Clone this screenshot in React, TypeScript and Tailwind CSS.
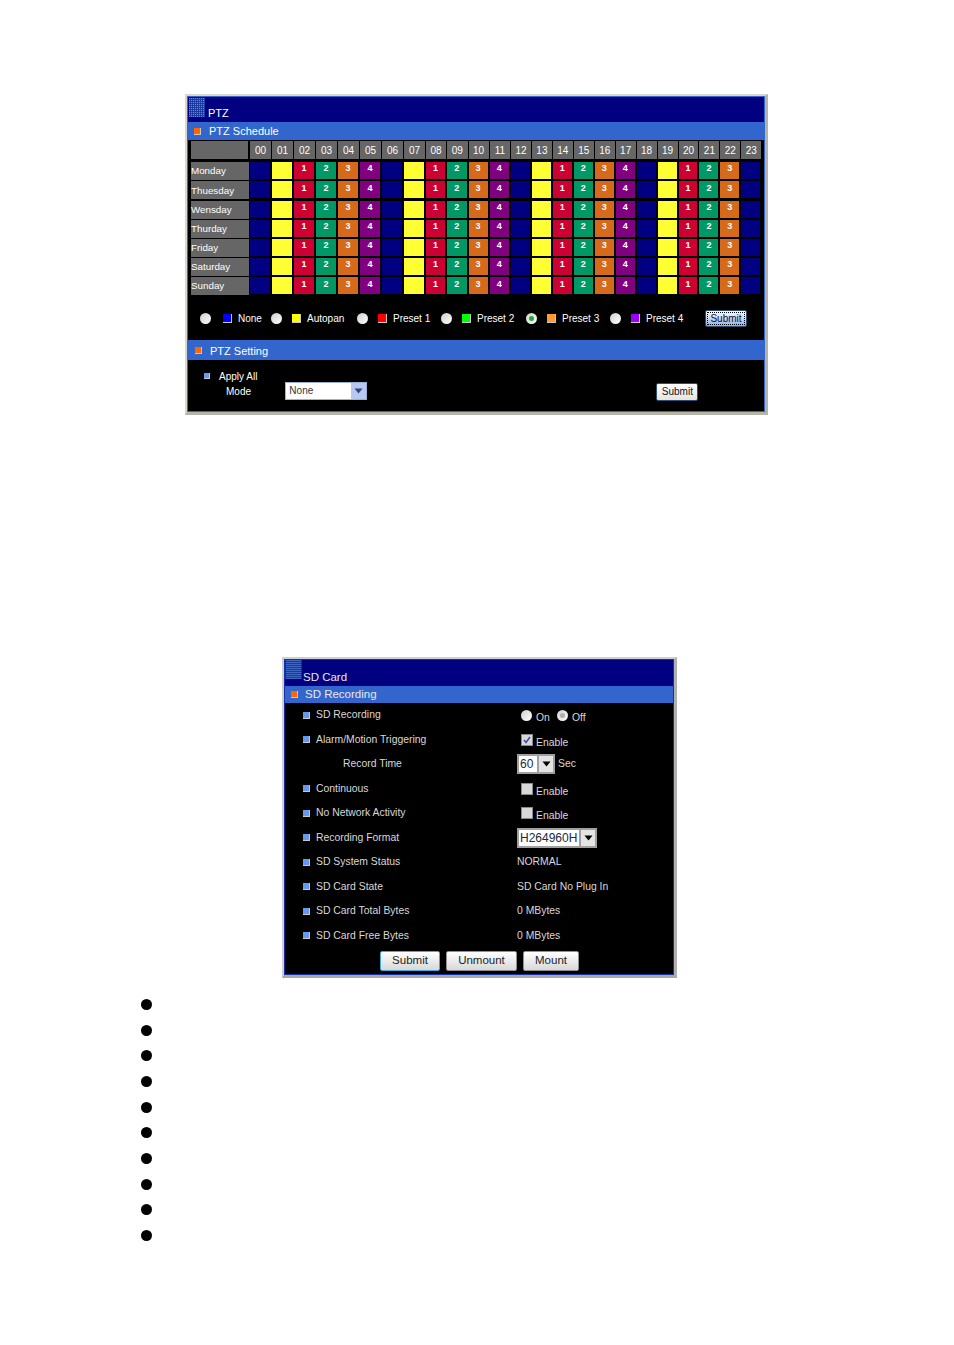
const hours = Array.from({ length: 24 }, (_, i) => String(i).padStart(2, '0'));
const days = ['Monday', 'Thuesday', 'Wensday', 'Thurday', 'Friday', 'Saturday', 'Sunday'];

// schedule repeats none, autopan, preset 1-4
const cellStyles = [
  'bg-[#000080]',
  'bg-[#ffff33]',
  'bg-[#cc0033]',
  'bg-[#009966]',
  'bg-[#d46a1a]',
  'bg-[#800080]'
];
const cellLabels = ['', '', '1', '2', '3', '4'];

const legend = [
  { label: 'None', color: 'bg-[#0000ff]', width: 'w-[71px]', gap: 'ml-[12px]' },
  { label: 'Autopan', color: 'bg-[#ffff00]', width: 'w-[86px]', gap: 'ml-[10px]' },
  { label: 'Preset 1', color: 'bg-[#ff0000]', width: 'w-[84px]', gap: 'ml-[10px]' },
  { label: 'Preset 2', color: 'bg-[#00ff00]', width: 'w-[85px]', gap: 'ml-[10px]' },
  { label: 'Preset 3', color: 'bg-[#ff9933]', width: 'w-[84px]', gap: 'ml-[10px]', checked: true },
  { label: 'Preset 4', color: 'bg-[#9900ff]', width: 'w-[90px]', gap: 'ml-[10px]' }
];

const Radio = ({ checked = false, dim = false }: { checked?: boolean; dim?: boolean }) => (
  <span className="flex h-[11px] w-[11px] shrink-0 items-center justify-center rounded-full bg-gradient-to-br from-[#cfcfcf] to-white">
    {checked && <span className="h-[5px] w-[5px] rounded-full bg-[#22aa33]" />}
    {dim && <span className="h-[5px] w-[5px] rounded-full bg-[#b0b0b0]" />}
  </span>
);

const Swatch = ({ className }: { className: string }) => (
  <span className={`shrink-0 border-r border-b border-[#c8c8c8] ${className}`} />
);

const DotGrid = ({ id, className }: { id: string; className: string }) => (
  <svg className={className} viewBox="0 0 16 19">
    <defs>
      <pattern id={id} width="2" height="2" patternUnits="userSpaceOnUse">
        <rect width="1.2" height="1.2" fill="#5b86d8" />
      </pattern>
    </defs>
    <rect width="16" height="19" fill="#12309a" />
    <rect width="16" height="19" fill={`url(#${id})`} />
  </svg>
);

const Arrow = ({ color = '#000' }: { color?: string }) => (
  <svg width="9" height="6" viewBox="0 0 9 6">
    <path d="M0.5 0.5 L8.5 0.5 L4.5 5.5 Z" fill={color} />
  </svg>
);

const Check = ({ checked = false }: { checked?: boolean }) => (
  <span className="flex h-[12px] w-[12px] shrink-0 items-center justify-center border border-[#8a8a8a] bg-[#d8d8d8]">
    {checked && (
      <svg width="8" height="8" viewBox="0 0 8 8">
        <path d="M1 4 L3 6.5 L7 1" fill="none" stroke="#3a4fb0" strokeWidth="1.5" />
      </svg>
    )}
  </span>
);

const SdSelect = ({ value, width }: { value: string; width: string }) => (
  <span className={`flex h-[20px] items-center border-2 border-[#a0a0a0] bg-white ${width}`}>
    <span className="flex-1 pl-[1px] text-[12px] text-[#1a2a40]">{value}</span>
    <span className="flex h-full w-[16px] items-center justify-center border-l-2 border-[#a0a0a0] bg-[#e4e4e4]">
      <Arrow />
    </span>
  </span>
);

const Enable = ({ checked = false }: { checked?: boolean }) => (
  <span className="ml-[4px] flex items-center">
    <Check checked={checked} />
    <span className="ml-[3px] translate-y-[3px]">Enable</span>
  </span>
);

const sdRows: { label: string; value: React.ReactNode; plain?: boolean }[] = [
  {
    label: 'SD Recording',
    value: (
      <span className="ml-[4px] flex items-center">
        <Radio />
        <span className="ml-[4px] translate-y-[3px]">On</span>
        <span className="ml-[7px]"><Radio dim /></span>
        <span className="ml-[4px] translate-y-[3px]">Off</span>
      </span>
    )
  },
  { label: 'Alarm/Motion Triggering', value: <Enable checked /> },
  {
    label: 'Record Time',
    plain: true,
    value: (
      <span className="flex items-center">
        <SdSelect value="60" width="w-[38px]" />
        <span className="ml-[3px]">Sec</span>
      </span>
    )
  },
  { label: 'Continuous', value: <Enable /> },
  { label: 'No Network Activity', value: <Enable /> },
  { label: 'Recording Format', value: <SdSelect value="H264960H" width="w-[80px]" /> },
  { label: 'SD System Status', value: 'NORMAL' },
  { label: 'SD Card State', value: 'SD Card No Plug In' },
  { label: 'SD Card Total Bytes', value: '0 MBytes' },
  { label: 'SD Card Free Bytes', value: '0 MBytes' }
];

const bullets = Array.from({ length: 10 }, (_, i) => i);

export default function App() {
  return (
    <div className="min-h-[1345px] bg-white pt-[94px] font-['Liberation_Sans',Arial,sans-serif]">
      {/* PTZ panel */}
      <div className="ml-[185px] w-[583px] border-2 border-r-[3px] border-b-[3px] border-[#d8d8cc] border-r-[#b4b4a8] border-b-[#b4b4a8]">
        <div className="border border-[#3366cc] bg-black">
          <div className="relative h-[25px] bg-[#000080]">
            <DotGrid id="ptz-dots" className="absolute left-[1px] top-[1px] h-[19px] w-[16px]" />
            <span className="absolute left-[20px] top-[9px] text-[11px] leading-[14px] text-white">PTZ</span>
          </div>
          <div className="flex h-[18px] items-center bg-[#3366cc] pl-[6px] pt-[1px] text-[11px] text-white">
            <Swatch className="mr-[8px] h-[7px] w-[7px] bg-[#ff6600]" />
            PTZ Schedule
          </div>
          <div className="grid grid-cols-[58px_repeat(8,22px)_repeat(4,21.25px)_repeat(12,20.95px)] gap-y-[1.2px] pl-[3px] pt-[1px]">
            <div className="mb-[2px] mr-[1px] h-[18px] bg-[#666666]" />
            {hours.map((h) => (
              <div
                key={h}
                className="mb-[2px] flex h-[18px] items-center justify-center border-l border-black bg-[#666666] text-[10px] text-white"
              >
                {h}
              </div>
            ))}
            {days.map((day) => (
              <div key={day} className="contents">
                <div className="flex h-[18px] items-center bg-[#666666] pt-[1px] text-[9.8px] text-white">
                  {day}
                </div>
                {hours.map((h, i) => {
                  const kind = i === 23 ? 0 : i % 6;
                  return (
                    <div key={h} className="h-[18px] px-[1px] pb-[1px]">
                      <div
                        className={`flex h-full items-center justify-center pb-[3px] text-[9px] font-bold text-white ${cellStyles[kind]}`}
                      >
                        {cellLabels[kind]}
                      </div>
                    </div>
                  );
                })}
              </div>
            ))}
          </div>
          <div className="flex h-[44.5px] items-center pl-[12px] pt-[2px] text-[10px] text-white">
            {legend.map((item) => (
              <div key={item.label} className={`flex items-center ${item.width}`}>
                <Radio checked={item.checked} />
                <Swatch className={`h-[9px] w-[9px] ${item.gap} ${item.color}`} />
                <span className="ml-[6px]">{item.label}</span>
              </div>
            ))}
            <button className="ml-[5px] h-[17px] w-[42px] rounded-[2px] border border-[#28507a] bg-gradient-to-b from-white to-[#8fb0e8] text-[10px] text-[#101030] outline-1 -outline-offset-3 outline-dotted outline-black">
              Submit
            </button>
          </div>
          <div className="flex h-[20px] items-center bg-[#3366cc] pl-[7px] pt-[2px] text-[11px] text-white">
            <Swatch className="mr-[8px] h-[7px] w-[7px] bg-[#ff6600]" />
            PTZ Setting
          </div>
          <div className="flex h-[51px] text-[10px] text-white">
            <div className="ml-[16px] pt-[9px]">
              <div className="flex items-center">
                <Swatch className="h-[6px] w-[6px] border-0 bg-[#6699ee]" />
                <span className="ml-[9px]">Apply All</span>
              </div>
              <div className="pl-[22px]">Mode</div>
            </div>
            <div className="ml-[28px] mt-[22px] flex h-[18px] w-[82px] items-center border border-[#9ab0d8] bg-white">
              <span className="flex-1 pl-[3px] text-[10px] text-[#333333]">None</span>
              <span className="flex h-full w-[15px] items-center justify-center bg-[#b8c8f0]">
                <Arrow color="#334488" />
              </span>
            </div>
            <button className="ml-[289px] mt-[23px] h-[18px] w-[42px] rounded-[2px] border border-[#28507a] bg-gradient-to-b from-white to-[#e8e4d8] text-[10px] text-[#101030]">
              Submit
            </button>
          </div>
        </div>
      </div>

      {/* SD card panel */}
      <div className="ml-[282px] mt-[242px] w-[395px] border-2 border-r-[3px] border-b-[3px] border-[#d0d0d0] border-b-[#a8a8a8] border-r-[#b0b0b0]">
        <div className="border border-[#1133aa] bg-black">
          <div className="relative h-[26px] bg-[#000080]">
            <DotGrid id="sd-dots" className="absolute left-0 top-0 h-[19px] w-[17px]" />
            <span className="absolute left-[18px] top-[10px] text-[11.5px] leading-[14px] text-[#e8e8e8]">SD Card</span>
          </div>
          <div className="flex h-[17px] items-center bg-[#3366cc] pl-[6px] text-[11.5px] text-[#e8e8e8]">
            <Swatch className="mr-[7px] h-[7px] w-[7px] border-0 bg-[#ff6600]" />
            SD Recording
          </div>
          <div className="text-[10.4px] text-[#d8d8d8]">
            {sdRows.map((row) => (
              <div key={row.label} className="flex h-[24.5px] items-center pl-[18px]">
                <div className="flex w-[214px] items-center">
                  {row.plain ? (
                    <span className="ml-[40px]">{row.label}</span>
                  ) : (
                    <>
                      <Swatch className="h-[7px] w-[7px] border-0 bg-[#6699ee]" />
                      <span className="ml-[6px]">{row.label}</span>
                    </>
                  )}
                </div>
                <div className="flex items-center">{row.value}</div>
              </div>
            ))}
            <div className="flex h-[26px] items-start justify-center gap-[6px] pl-[1px] pt-[3px] text-[11.5px]">
              <button className="h-[20px] w-[60px] rounded-[2px] border border-[#44aadd] bg-gradient-to-b from-white to-[#d8d8d8] text-[#222222]">
                Submit
              </button>
              <button className="h-[20px] w-[71px] rounded-[2px] border border-[#909090] bg-gradient-to-b from-white to-[#d8d8d8] text-[#222222]">
                Unmount
              </button>
              <button className="h-[20px] w-[56px] rounded-[2px] border border-[#909090] bg-gradient-to-b from-white to-[#d8d8d8] text-[#222222]">
                Mount
              </button>
            </div>
          </div>
        </div>
      </div>

      {/* empty bullet list */}
      <div className="ml-[141px] mt-[21px] flex flex-col gap-[14.7px]">
        {bullets.map((b) => (
          <span key={b} className="h-[11px] w-[11px] rounded-full bg-black" />
        ))}
      </div>
    </div>
  );
}
